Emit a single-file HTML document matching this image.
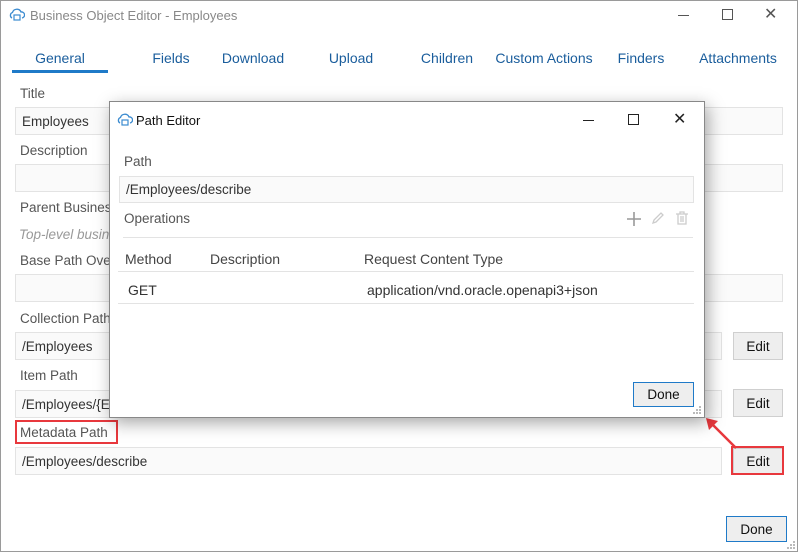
<!DOCTYPE html>
<html><head><meta charset="utf-8"><style>
*{margin:0;padding:0;box-sizing:border-box}
body{width:798px;height:552px;background:#fff;font-family:"Liberation Sans",sans-serif;font-size:14px;color:#333;position:relative;overflow:hidden}
.abs{position:absolute;white-space:nowrap}
.win{position:absolute;left:0;top:0;width:798px;height:552px;border:1px solid #9a9a9a}
.lbl{position:absolute;color:#555;font-size:13.5px;white-space:nowrap}
.inp{position:absolute;background:#fafafa;border:1px solid #e3e3e3;color:#333;font-size:13.5px;padding-left:6px;line-height:27px;white-space:nowrap;overflow:hidden}
.btn{position:absolute;background:#eee;border:1px solid #cfcfcf;text-align:center;font-size:13.5px;color:#111}
.tab{position:absolute;top:50px;color:#1a5d9c;font-size:14px;transform:translateX(-50%);white-space:nowrap}
.red{position:absolute;border:2px solid #e8383d}
</style></head><body>
<div class="win"></div>
<svg class="abs" style="left:9px;top:8px" width="16" height="14" viewBox="0 0 16 14"><path d="M3 10 A3 3 0 0 1 3.5 4.5 A4.5 4.5 0 0 1 12 4 A3 3 0 0 1 13 10" fill="none" stroke="#3b8bd0" stroke-width="1.3"/><rect x="5" y="7" width="6" height="5" fill="none" stroke="#3b8bd0" stroke-width="1.2"/></svg>
<div class="abs" style="left:30px;top:8px;color:#888;font-size:13px">Business Object Editor - Employees</div>
<div class="abs" style="left:678px;top:15px;width:11px;height:1px;background:#555"></div>
<div class="abs" style="left:722px;top:9px;width:11px;height:11px;border:1px solid #555"></div>
<div class="abs" style="left:764px;top:4px;font-size:16px;color:#555">✕</div>

<div class="tab" style="left:60px">General</div>
<div class="abs" style="left:12px;top:70px;width:96px;height:3px;background:#1f7ac8"></div>
<div class="tab" style="left:171px">Fields</div>
<div class="tab" style="left:253px">Download</div>
<div class="tab" style="left:351px">Upload</div>
<div class="tab" style="left:447px">Children</div>
<div class="tab" style="left:544px">Custom Actions</div>
<div class="tab" style="left:641px">Finders</div>
<div class="tab" style="left:738px">Attachments</div>

<div class="lbl" style="left:20px;top:86px">Title</div>
<div class="inp" style="left:15px;top:107px;width:768px;height:28px">Employees</div>
<div class="lbl" style="left:20px;top:143px">Description</div>
<div class="inp" style="left:15px;top:164px;width:768px;height:28px"></div>
<div class="lbl" style="left:20px;top:200px">Parent Business Object</div>
<div class="lbl" style="left:19px;top:227px;font-style:italic;color:#999">Top-level business object</div>
<div class="lbl" style="left:20px;top:253px">Base Path Override</div>
<div class="inp" style="left:15px;top:274px;width:768px;height:28px"></div>
<div class="lbl" style="left:20px;top:311px">Collection Path</div>
<div class="inp" style="left:15px;top:332px;width:707px;height:28px">/Employees</div>
<div class="btn" style="left:733px;top:332px;width:50px;height:28px;line-height:27px">Edit</div>
<div class="lbl" style="left:20px;top:368px">Item Path</div>
<div class="inp" style="left:15px;top:390px;width:707px;height:28px">/Employees/{EmpId}</div>
<div class="btn" style="left:733px;top:389px;width:50px;height:28px;line-height:27px">Edit</div>
<div class="lbl" style="left:20px;top:425px">Metadata Path</div>
<div class="red" style="left:15px;top:420px;width:103px;height:24px"></div>
<div class="inp" style="left:15px;top:447px;width:707px;height:28px">/Employees/describe</div>
<div class="btn" style="left:733px;top:448px;width:50px;height:26px;line-height:25px">Edit</div>
<div class="red" style="left:731px;top:446px;width:53px;height:29px"></div>
<div class="btn" style="left:726px;top:516px;width:61px;height:26px;line-height:25px;border-color:#1f7ac8">Done</div>
<svg class="abs" style="left:786px;top:540px" width="10" height="10"><g fill="#bbb"><rect x="7" y="1" width="2" height="2"/><rect x="4" y="4" width="2" height="2"/><rect x="7" y="4" width="2" height="2"/><rect x="1" y="7" width="2" height="2"/><rect x="4" y="7" width="2" height="2"/><rect x="7" y="7" width="2" height="2"/></g></svg>

<svg class="abs" style="left:0;top:0" width="798" height="552"><line x1="736" y1="448" x2="712" y2="424" stroke="#e8383d" stroke-width="2.5"/><polygon points="706,418 718,421 709,430" fill="#e8383d"/></svg>

<div class="abs" style="left:109px;top:101px;width:596px;height:317px;background:#fff;border:1px solid #888;box-shadow:3px 5px 16px rgba(0,0,0,.35)"></div>
<svg class="abs" style="left:117px;top:113px" width="16" height="14" viewBox="0 0 16 14"><path d="M3 10 A3 3 0 0 1 3.5 4.5 A4.5 4.5 0 0 1 12 4 A3 3 0 0 1 13 10" fill="none" stroke="#3b8bd0" stroke-width="1.3"/><rect x="5" y="7" width="6" height="5" fill="none" stroke="#3b8bd0" stroke-width="1.2"/></svg>
<div class="abs" style="left:136px;top:113px;font-size:13px;color:#111">Path Editor</div>
<div class="abs" style="left:583px;top:120px;width:11px;height:1px;background:#222"></div>
<div class="abs" style="left:628px;top:114px;width:11px;height:11px;border:1px solid #222"></div>
<div class="abs" style="left:673px;top:109px;font-size:16px;color:#222">✕</div>
<div class="lbl" style="left:124px;top:154px">Path</div>
<div class="inp" style="left:119px;top:176px;width:575px;height:27px;line-height:26px">/Employees/describe</div>
<div class="lbl" style="left:124px;top:211px">Operations</div>
<svg class="abs" style="left:626px;top:211px" width="16" height="16"><path d="M8 1 V15 M1 8 H15" stroke="#999" stroke-width="1.6"/></svg>
<svg class="abs" style="left:650px;top:210px" width="16" height="16" viewBox="0 0 16 16"><path d="M3 13 L4 10 L11 3 L13 5 L6 12 Z" fill="none" stroke="#ccc" stroke-width="1.3"/></svg>
<svg class="abs" style="left:674px;top:210px" width="16" height="16" viewBox="0 0 16 16"><path d="M2 4 H14 M6 4 V2 H10 V4 M4 4 V14 H12 V4 M7 6 V12 M9 6 V12" fill="none" stroke="#ccc" stroke-width="1.3"/></svg>
<div class="abs" style="left:123px;top:237px;width:570px;height:1px;background:#e3e3e3"></div>
<div class="abs" style="left:125px;top:251px;color:#444">Method</div>
<div class="abs" style="left:210px;top:251px;color:#444">Description</div>
<div class="abs" style="left:364px;top:251px;color:#444">Request Content Type</div>
<div class="abs" style="left:118px;top:271px;width:576px;height:1px;background:#e3e3e3"></div>
<div class="abs" style="left:128px;top:282px;color:#333">GET</div>
<div class="abs" style="left:367px;top:282px;color:#333">application/vnd.oracle.openapi3+json</div>
<div class="abs" style="left:118px;top:303px;width:576px;height:1px;background:#e3e3e3"></div>
<div class="btn" style="left:633px;top:382px;width:61px;height:25px;line-height:24px;border-color:#1f7ac8">Done</div>
<svg class="abs" style="left:692px;top:405px" width="10" height="10"><g fill="#bbb"><rect x="7" y="1" width="2" height="2"/><rect x="4" y="4" width="2" height="2"/><rect x="7" y="4" width="2" height="2"/><rect x="1" y="7" width="2" height="2"/><rect x="4" y="7" width="2" height="2"/><rect x="7" y="7" width="2" height="2"/></g></svg>
</body></html>
